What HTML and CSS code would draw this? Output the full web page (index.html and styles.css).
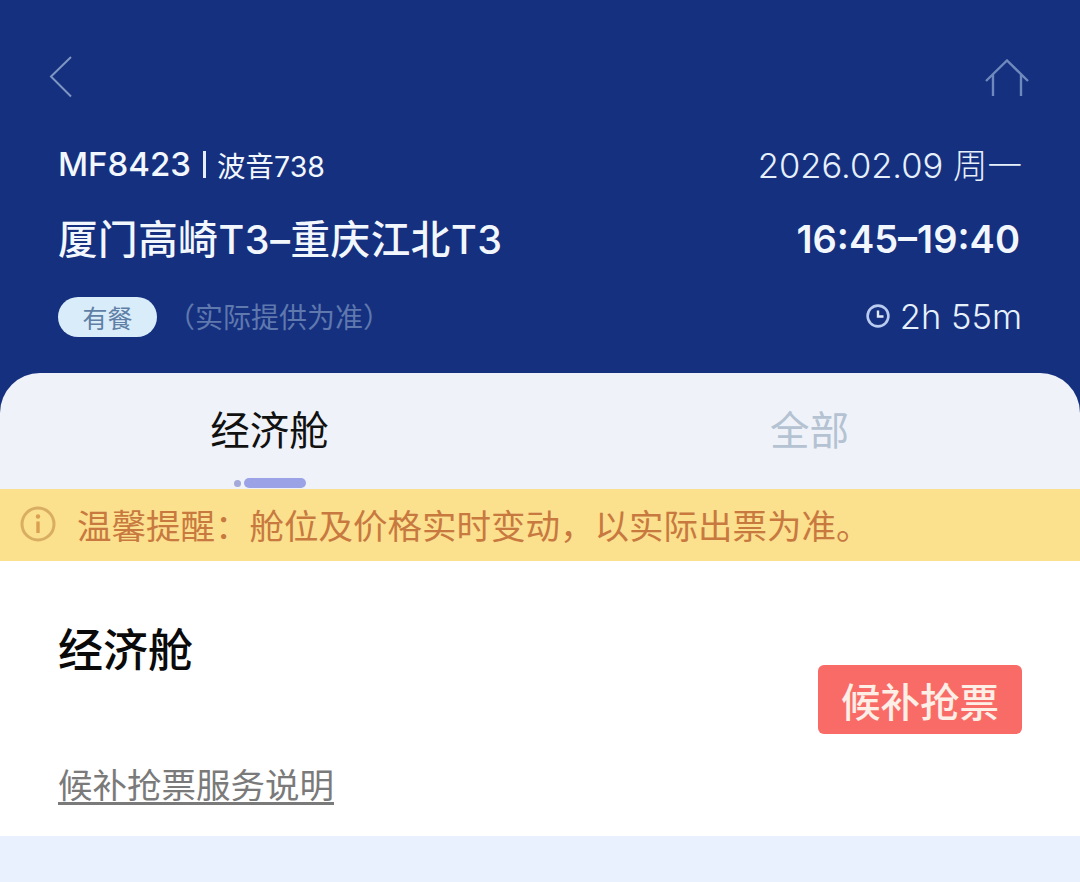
FILE: index.html
```html
<!DOCTYPE html>
<html lang="zh-CN">

<head>
    <meta charset="UTF-8">
    <meta name="viewport" content="width=device-width, initial-scale=1.0">
    <title>航班详情</title>
    <link rel="stylesheet" href="styles.css">
</head>

<body>
    <div class="app">
        <div class="nav">
            <svg class="nav-back" width="26" height="44" viewBox="0 0 26 44">
                <path d="M23 2 L3 21.5 L23 41.5" fill="none" stroke="#7f95c2" stroke-width="2" />
            </svg>
            <svg class="nav-home" width="46" height="38" viewBox="0 0 46 38">
                <path d="M2 22 L23 1.5 L44 22 M9 15 V37 M37 15 V37" fill="none" stroke="#6f89bd" stroke-width="2.4" />
            </svg>
        </div>

        <div class="flight">
            <div class="row row-no">
                <div class="flight-no"><b>MF8423</b><i class="sep"></i><span>波音738</span></div>
                <div class="flight-date">2026.02.09 周一</div>
            </div>
            <div class="row row-route">
                <div class="route">厦门高崎T3–重庆江北T3</div>
                <div class="time">16:45–19:40</div>
            </div>
            <div class="row row-meta">
                <div class="meal"><span class="meal-tag">有餐</span><span class="meal-note">（实际提供为准）</span></div>
                <div class="duration">
                    <svg width="24" height="24" viewBox="0 0 24 24">
                        <circle cx="12" cy="12" r="10.4" fill="none" stroke="#b9cbee" stroke-width="2.6" />
                        <path d="M12 6.5 V12.5 H17.5" fill="none" stroke="#dfe9f8" stroke-width="2.4" />
                    </svg>
                    <span>2h 55m</span>
                </div>
            </div>
        </div>

        <div class="sheet">
            <div class="tabs">
                <div class="tab tab-active">经济舱<span class="tab-mark"><i></i><b></b></span></div>
                <div class="tab">全部</div>
            </div>
            <div class="notice">
                <svg width="36" height="36" viewBox="0 0 36 36">
                    <circle cx="18" cy="18" r="16" fill="none" stroke="#d9ae62" stroke-width="3" />
                    <circle cx="18" cy="10.5" r="2.2" fill="#d9a04f" />
                    <path d="M18 15.5 V27" fill="none" stroke="#d9a04f" stroke-width="3.4" />
                </svg>
                <span>温馨提醒：舱位及价格实时变动，以实际出票为准。</span>
            </div>
            <div class="cabin">
                <div class="cabin-info">
                    <div class="cabin-name">经济舱</div>
                    <a class="cabin-link">候补抢票服务说明</a>
                </div>
                <div class="cabin-btn">候补抢票</div>
            </div>
            <div class="foot"></div>
        </div>
    </div>
</body>

</html>
```

FILE: styles.css
```css
* {
    box-sizing: border-box;
}

body {
    margin: 0;
    font-family: "Inter", "Noto Sans CJK SC", sans-serif;
}

.app {
    display: flex;
    flex-direction: column;
    height: 882px;
    overflow: hidden;
    background: #15307f;
}

.nav {
    display: flex;
    justify-content: space-between;
    align-items: center;
    height: 136px;
    padding: 18px 50px 0 48px;
}

.nav-home {
    margin-top: 2px;
}

.flight {
    height: 237px;
    padding: 0 58px;
    color: #f2f7fd;
}

.row {
    display: flex;
    justify-content: space-between;
    align-items: center;
}

.row-no {
    height: 56px;
}

.row-route {
    height: 94px;
}

.row-meta {
    height: 60px;
}

.flight-no {
    display: flex;
    align-items: center;
    font-size: 28.5px;
}

.flight-no b {
    font-size: 33px;
    font-weight: 500;
}

.sep {
    width: 3px;
    height: 27px;
    margin: 0 11px 0 12px;
    background: #e6eefa;
}

.flight-date {
    padding-bottom: 2px;
    font-size: 34.5px;
    font-weight: 300;
    color: #e6f0fa;
}

.route {
    padding-bottom: 6px;
    font-size: 39.5px;
    font-weight: 500;
    letter-spacing: 0.6px;
}

.time {
    padding-right: 2px;
    font-size: 38px;
    font-weight: 600;
}

.meal {
    display: flex;
    align-items: center;
}

.meal-tag {
    display: flex;
    justify-content: center;
    align-items: center;
    width: 99px;
    height: 40px;
    margin-top: 2px;
    border-radius: 20px;
    background: #d9ecfa;
    color: #5f7fa5;
    font-size: 25px;
}

.meal-note {
    margin-left: 10px;
    color: #5f78ae;
    font-size: 28px;
}

.duration {
    display: flex;
    align-items: center;
    gap: 10px;
    font-size: 34.5px;
    font-weight: 300;
    color: #e6f0fa;
}

.sheet {
    display: flex;
    flex-direction: column;
    flex: 1;
    border-radius: 40px 40px 0 0;
    background: #eff3f9;
    overflow: hidden;
}

.tabs {
    display: flex;
    height: 116px;
}

.tab {
    position: relative;
    flex: 1;
    padding-top: 29px;
    padding-right: 1px;
    text-align: center;
    font-size: 39.5px;
    line-height: 58px;
    color: #b4c2d2;
}

.tab-active {
    color: #111;
}

.tab-mark {
    position: absolute;
    left: 234px;
    bottom: 1px;
    display: flex;
    gap: 3px;
    align-items: center;
}

.tab-mark i {
    width: 7px;
    height: 7px;
    border-radius: 50%;
    background: #a3a9d8;
}

.tab-mark b {
    width: 62px;
    height: 10px;
    border-radius: 5px;
    background: #9ba3e6;
}

.notice {
    display: flex;
    align-items: center;
    gap: 21px;
    height: 72px;
    padding: 0 20px 2px;
    background: #fbe08e;
    color: #c8793f;
    font-size: 34.5px;
}

.cabin {
    display: flex;
    justify-content: space-between;
    align-items: center;
    height: 275px;
    padding: 0 58px;
    background: #fff;
}

.cabin-info {
    display: flex;
    flex-direction: column;
    gap: 80px;
    padding-top: 29px;
}

.cabin-name {
    font-size: 45px;
    font-weight: 500;
    line-height: 66px;
    color: #0a0a0a;
}

.cabin-link {
    font-size: 34.5px;
    line-height: 44px;
    color: #7a7a7a;
    text-decoration: underline;
    text-underline-offset: 4px;
}

.cabin-btn {
    display: flex;
    justify-content: center;
    align-items: center;
    width: 204px;
    height: 69px;
    margin-top: 1px;
    border-radius: 6px;
    background: #f96b67;
    color: #fdeee6;
    font-size: 39.5px;
    font-weight: 500;
}

.foot {
    flex: 1;
    background: #e8f1fd;
}
```
